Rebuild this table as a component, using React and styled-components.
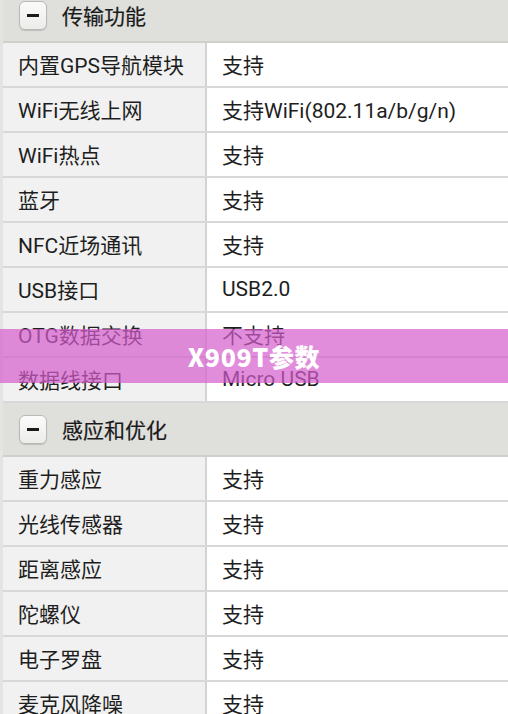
import React from "react";
import styled, { createGlobalStyle } from "styled-components";

const Global = createGlobalStyle`
  html, body { margin: 0; padding: 0; background: #ffffff; }
  body { font-family: Roboto, "Noto Sans CJK SC", sans-serif; overflow: hidden; }
`;

const Page = styled.div`
  position: relative;
  width: 508px;
  height: 714px;
  overflow: hidden;
`;

const Table = styled.div`
  display: flex;
  flex-direction: column;
  margin-top: -11px;
  border-left: 3px solid #e4e4e4;
`;

const SectionHeader = styled.div`
  display: flex;
  align-items: center;
  gap: 15px;
  height: 54px;
  box-sizing: border-box;
  padding: 0 0 0 16px;
  background: #dfdfdc;
  border-bottom: 2px solid #cfcfcc;
  font-size: 21px;
  color: #1a1a1a;
  -webkit-text-stroke: 0.2px #1a1a1a;
`;

const Toggle = styled.div`
  width: 28px;
  height: 29px;
  box-sizing: border-box;
  border: 1px solid #b9b9b6;
  border-radius: 6px;
  background: linear-gradient(#fbfbfb, #ececea);
  box-shadow: 0 1px 1px rgba(0, 0, 0, 0.15);
  display: flex;
  align-items: center;
  justify-content: center;
  &::after {
    content: "";
    width: 12px;
    height: 3px;
    background: #1a1a1a;
  }
`;

const Row = styled.div`
  display: grid;
  grid-template-columns: 204px 1fr;
  height: 45px;
  box-sizing: border-box;
  border-bottom: 2px solid #d8d8d8;
  font-size: 21px;
  color: #1e1e1e;
`;

const Label = styled.div`
  display: flex;
  align-items: center;
  padding: 0 0 2px 15px;
  background: #f1f1f1;
  border-right: 2px solid #d3d3d3;
`;

const Value = styled.div`
  display: flex;
  align-items: center;
  padding: 0 0 2px 15px;
  background: #ffffff;
`;

const Banner = styled.div`
  position: absolute;
  left: 0;
  right: 0;
  top: 329px;
  height: 54px;
  background: rgba(214, 92, 205, 0.7);
  display: flex;
  align-items: center;
  justify-content: center;
  color: #ffffff;
  font-weight: 900;
  font-size: 25px;
  font-family: "Noto Sans CJK SC", sans-serif;
  letter-spacing: 0.6px;
`;

const sections = [
  {
    title: "传输功能",
    rows: [
      ["内置GPS导航模块", "支持"],
      ["WiFi无线上网", "支持WiFi(802.11a/b/g/n)"],
      ["WiFi热点", "支持"],
      ["蓝牙", "支持"],
      ["NFC近场通讯", "支持"],
      ["USB接口", "USB2.0"],
      ["OTG数据交换", "不支持"],
      ["数据线接口", "Micro USB"],
    ],
  },
  {
    title: "感应和优化",
    rows: [
      ["重力感应", "支持"],
      ["光线传感器", "支持"],
      ["距离感应", "支持"],
      ["陀螺仪", "支持"],
      ["电子罗盘", "支持"],
      ["麦克风降噪", "支持"],
    ],
  },
];

export default function App() {
  return (
    <Page>
      <Global />
      <Table>
        {sections.map((s) => (
          <React.Fragment key={s.title}>
            <SectionHeader>
              <Toggle />
              <span>{s.title}</span>
            </SectionHeader>
            {s.rows.map(([k, v]) => (
              <Row key={k}>
                <Label>{k}</Label>
                <Value>{v}</Value>
              </Row>
            ))}
          </React.Fragment>
        ))}
      </Table>
      <Banner>X909T参数</Banner>
    </Page>
  );
}
